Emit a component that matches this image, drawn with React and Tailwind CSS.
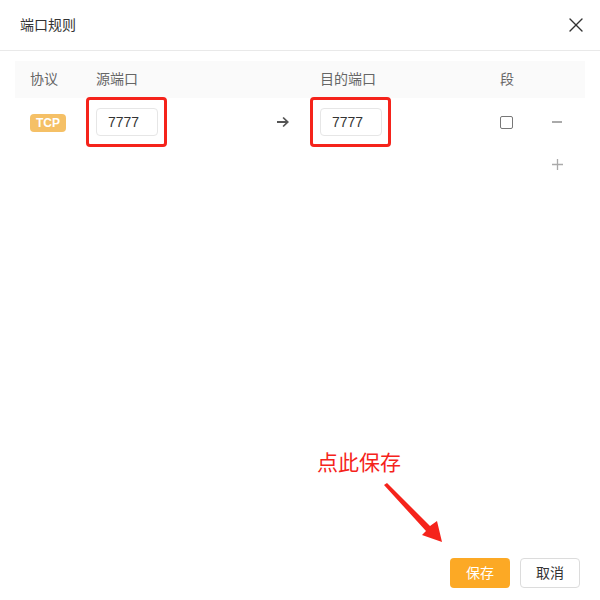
import { X } from 'lucide-react';

const font = { fontFamily: '"Liberation Sans", "Noto Sans CJK SC", sans-serif' };

function PortInput({ value }) {
    return (
        <div className="relative w-[62px]">
            <input
                readOnly
                value={value}
                className="h-[28px] w-[62px] rounded-sm border border-[#e6e6e6] bg-white pl-[11px] text-[14px] text-[#333] outline-none"
            />
            <div className="pointer-events-none absolute -left-[10px] -right-[9px] -top-[11px] -bottom-[11px] rounded-[4px] border-[3px] border-[#f5231b]" />
        </div>
    );
}

export default function App() {
    return (
        <div
            className="relative flex h-screen w-full flex-col bg-white text-[14px] text-[#333]"
            style={font}
        >
            <header className="flex h-[51px] shrink-0 items-center justify-between border-b border-[#e9e9e9] pl-5 pr-[12px]">
                <h1 className="text-[14px] text-[#333]">端口规则</h1>
                <X size={24} strokeWidth={1.4} className="text-[#333]" />
            </header>

            <main className="flex-1 px-[15px] pt-[10px]">
                <div className="flex h-[37px] items-center bg-[#fafafa] text-[#666]">
                    <div className="w-[66px] pl-[15px]">协议</div>
                    <div className="w-[180px] pl-[15px]">源端口</div>
                    <div className="w-[44px]" />
                    <div className="w-[180px] pl-[15px]">目的端口</div>
                    <div className="w-[52px] pl-[15px]">段</div>
                    <div className="flex-1" />
                </div>

                <div className="flex h-[48px] items-center">
                    <div className="w-[66px] pl-[15px]">
                        <span className="inline-flex h-[18px] w-[36px] items-center justify-center rounded-sm bg-[#f5c066] text-[12px] font-semibold text-white">
                            TCP
                        </span>
                    </div>
                    <div className="w-[180px] pl-[15px]">
                        <PortInput value="7777" />
                    </div>
                    <div className="w-[44px] pl-[16px]">
                        <svg width="12" height="10" viewBox="0 0 12 10">
                            <path d="M0 4h8.5L5.5 1l1.2-1L12 5l-5.3 5-1.2-1 3-3H0z" fill="#555" />
                        </svg>
                    </div>
                    <div className="w-[180px] pl-[15px]">
                        <PortInput value="7777" />
                    </div>
                    <div className="w-[52px] pl-[15px]">
                        <div className="h-[13px] w-[13px] rounded-[2px] border border-[#777] bg-white" />
                    </div>
                    <div className="flex-1 pl-[15px]">
                        <div className="h-[2px] w-[10px] bg-[#aaa]" />
                    </div>
                </div>

                <div className="flex h-[36px] items-center">
                    <div className="w-[522px]" />
                    <div className="pl-[15px]">
                        <svg width="11" height="11" viewBox="0 0 11 11">
                            <path d="M5.5 0v11M0 5.5h11" stroke="#aaa" strokeWidth="1.3" />
                        </svg>
                    </div>
                </div>
            </main>

            <footer className="flex shrink-0 justify-end gap-[10px] pb-[12px] pr-5">
                <button className="h-[30px] w-[60px] rounded-sm bg-[#fca925] text-[14px] text-white">
                    保存
                </button>
                <button className="h-[30px] w-[60px] rounded-sm border border-[#dcdcdc] bg-white text-[14px] text-[#333]">
                    取消
                </button>
            </footer>

            <div className="absolute left-[317px] top-[448px] text-[21px] leading-[30px] text-[#f5231b]">
                点此保存
            </div>
            <svg
                className="absolute left-[380px] top-[480px]"
                width="66"
                height="66"
                viewBox="0 0 66 66"
            >
                <polygon points="62,62 42,55 46,51 4,5 7,3 50,46 57,41" fill="#f5231b" />
            </svg>
        </div>
    );
}
